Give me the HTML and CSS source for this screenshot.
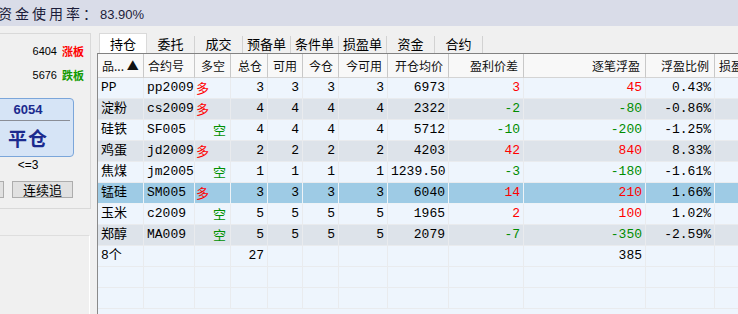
FILE: index.html
```html
<!DOCTYPE html>
<html lang="zh-CN">
<head>
  <meta charset="UTF-8" />
  <title>持仓</title>
  <link rel="stylesheet" href="styles.css">
</head>
<body>
  <div class="topbar"><span class="label">资金使用率：</span><span class="value">83.90%</span></div>
  <div class="main">
    <div class="side">
      <div class="panel">
        <div class="limit"><span>6404</span><span class="tag up">涨板</span></div>
        <div class="limit"><span>5676</span><span class="tag down">跌板</span></div>
        <div class="order-btn">
          <div class="btn-price">6054</div>
          <div class="btn-action">平仓</div>
        </div>
        <div class="cond">&lt;=3</div>
        <div class="btn-row">
          <button class="btn"></button>
          <button class="btn">连续追</button>
        </div>
      </div>
      <div class="side-bottom"></div>
    </div>

    <div class="content">
      <div class="tabs">
        <div class="tab active">持仓</div>
        <div class="tab">委托</div>
        <div class="tab">成交</div>
        <div class="tab">预备单</div>
        <div class="tab">条件单</div>
        <div class="tab">损盈单</div>
        <div class="tab">资金</div>
        <div class="tab">合约</div>
      </div>
      <div class="grid">
        <table>
          <thead>
            <tr>
              <th class="w1 left">品... ▲</th>
              <th class="w2 left">合约号</th>
              <th class="w3">多空</th>
              <th class="w4">总仓</th>
              <th class="w5">可用</th>
              <th class="w6">今仓</th>
              <th class="w7">今可用</th>
              <th class="w8">开仓均价</th>
              <th class="w9">盈利价差</th>
              <th class="w10">逐笔浮盈</th>
              <th class="w11">浮盈比例</th>
              <th class="w12 left">损盈单</th>
            </tr>
          </thead>
          <tbody>
            <tr>
              <td class="left">PP</td><td class="left">pp2009</td><td class="long">多</td>
              <td>3</td><td>3</td><td>3</td><td>3</td><td>6973</td>
              <td class="red">3</td><td class="red">45</td><td>0.43%</td><td></td>
            </tr>
            <tr class="alt">
              <td class="left">淀粉</td><td class="left">cs2009</td><td class="long">多</td>
              <td>4</td><td>4</td><td>4</td><td>4</td><td>2322</td>
              <td class="green">-2</td><td class="green">-80</td><td>-0.86%</td><td></td>
            </tr>
            <tr>
              <td class="left">硅铁</td><td class="left">SF005</td><td class="short">空</td>
              <td>4</td><td>4</td><td>4</td><td>4</td><td>5712</td>
              <td class="green">-10</td><td class="green">-200</td><td>-1.25%</td><td></td>
            </tr>
            <tr class="alt">
              <td class="left">鸡蛋</td><td class="left">jd2009</td><td class="long">多</td>
              <td>2</td><td>2</td><td>2</td><td>2</td><td>4203</td>
              <td class="red">42</td><td class="red">840</td><td>8.33%</td><td></td>
            </tr>
            <tr>
              <td class="left">焦煤</td><td class="left">jm2005</td><td class="short">空</td>
              <td>1</td><td>1</td><td>1</td><td>1</td><td>1239.50</td>
              <td class="green">-3</td><td class="green">-180</td><td>-1.61%</td><td></td>
            </tr>
            <tr class="selected">
              <td class="left">锰硅</td><td class="left">SM005</td><td class="long">多</td>
              <td>3</td><td>3</td><td>3</td><td>3</td><td>6040</td>
              <td class="red">14</td><td class="red">210</td><td>1.66%</td><td></td>
            </tr>
            <tr>
              <td class="left">玉米</td><td class="left">c2009</td><td class="short">空</td>
              <td>5</td><td>5</td><td>5</td><td>5</td><td>1965</td>
              <td class="red">2</td><td class="red">100</td><td>1.02%</td><td></td>
            </tr>
            <tr class="alt">
              <td class="left">郑醇</td><td class="left">MA009</td><td class="short">空</td>
              <td>5</td><td>5</td><td>5</td><td>5</td><td>2079</td>
              <td class="green">-7</td><td class="green">-350</td><td>-2.59%</td><td></td>
            </tr>
            <tr>
              <td class="left">8个</td><td></td><td></td>
              <td>27</td><td></td><td></td><td></td><td></td>
              <td></td><td>385</td><td></td><td></td>
            </tr>
            <tr><td></td><td></td><td></td><td></td><td></td><td></td><td></td><td></td><td></td><td></td><td></td><td></td></tr>
            <tr><td></td><td></td><td></td><td></td><td></td><td></td><td></td><td></td><td></td><td></td><td></td><td></td></tr>
          </tbody>
        </table>
      </div>
    </div>
  </div>
</body>
</html>
```

FILE: styles.css
```css
* { box-sizing: border-box; }
body { margin: 0; width: 738px; height: 314px; overflow: hidden; background: #f0f0f0; font-family: "Liberation Sans", "Noto Sans CJK SC", sans-serif; color: #000; }

/* top status bar */
.topbar { height: 26px; line-height: 26px; background: #d9dce8; color: #1c1d3a; white-space: nowrap; margin-left: -2px; }
.topbar .label { font-size: 14px; letter-spacing: 3px; font-family: "Noto Sans CJK SC", sans-serif; }
.topbar .value { font-size: 13px; }

.main { display: flex; }

/* left order panel */
.side { width: 91px; flex: none; padding-top: 7px; }
.panel { border: 1px solid #d9d9d9; border-left: none; padding: 5px 0 10px; }
.limit { display: flex; justify-content: flex-end; gap: 5px; padding-right: 6px; height: 24px; line-height: 24px; font-size: 11px; }
.tag { font-weight: bold; font-family: "Noto Sans CJK SC", sans-serif; }
.up { color: #f00; }
.down { color: #129a00; }

.order-btn { margin: 11px 0 0 -18px; width: 92px; height: 59px; border: 1px solid #7ba6da; border-radius: 4px; background: #d6e4f6; color: #1b2a8e; }
.btn-price { height: 22px; line-height: 22px; margin-right: 3px; padding-left: 3px; text-align: center; font-size: 13px; font-weight: bold; border-bottom: 1px solid #8a8d96; }
.btn-action { height: 34px; line-height: 34px; text-align: center; font-size: 19px; font-weight: bold; letter-spacing: 1px; font-family: "Noto Sans CJK SC", serif; }

.cond { width: 56px; height: 16px; line-height: 16px; text-align: center; font-size: 12px; }
.btn-row { display: flex; gap: 8px; margin: 8px 0 0 -57px; }
.btn { width: 61px; height: 17px; padding: 0; border: 1px solid #adadad; background: #e1e1e1; font: 13px/15px "Noto Sans CJK SC", sans-serif; color: #000; }

.side-bottom { margin-top: 26px; width: 90px; height: 79px; border: 1px solid #fff; border-top-color: #dedede; border-left: none; border-bottom: none; }

/* right grid area */
.content { flex: 1; min-width: 0; margin-left: 6px; overflow: hidden; }
.tabs { display: flex; height: 27px; padding: 7px 0 0 2px; font-family: "Noto Sans CJK SC", sans-serif; font-size: 13px; }
.tab { width: 48px; height: 17px; margin-top: 3px; line-height: 16px; text-align: center; border-right: 1px solid #d2d2d2; }
.tab.active { height: 20px; margin-top: 0; line-height: 19px; background: #fff; border: 1px solid #dadada; border-bottom: none; }

.grid { height: 261px; overflow: hidden; border-top: 1px solid #828282; border-left: 1px solid #8a8a8a; background: #eef5fd; }
table { width: 677px; table-layout: fixed; border-collapse: separate; border-spacing: 0; }

th { height: 24px; padding: 0 5px 0 4px; background: #f8f8f8; border-right: 1px solid #c8c8c8; border-bottom: 1px solid #d4d4d4; font: 12px "Noto Sans CJK SC", sans-serif; color: #111; text-align: right; white-space: nowrap; overflow: hidden; }
th.left { text-align: left; }
.w1 { width: 46px; } .w2 { width: 51px; } .w3 { width: 36px; } .w4 { width: 37px; }
.w5 { width: 35px; } .w6 { width: 36px; } .w7 { width: 49px; } .w8 { width: 61px; }
.w9 { width: 75px; } .w10 { width: 122px; } .w11 { width: 69px; } .w12 { width: 60px; }

td { height: 21px; padding: 0 3px; border-right: 1px solid #e9ebee; border-bottom: 1px solid #e9ebee; font: 13px/20px "Liberation Mono", "Noto Sans CJK SC", monospace; text-align: right; white-space: nowrap; overflow: hidden; }
td.left { text-align: left; padding-left: 3px; }
tr.alt td { background: #dde3ea; }
tr.selected td { background: #9ecbe5; border-color: #eef3f7; }

.long { text-align: left; padding-left: 1px; color: #f00; font-family: "Noto Sans CJK SC", sans-serif; }
.short { padding-right: 4px; color: #009000; font-family: "Noto Sans CJK SC", sans-serif; }
.red { color: #f00; }
.green { color: #008c00; }
```
